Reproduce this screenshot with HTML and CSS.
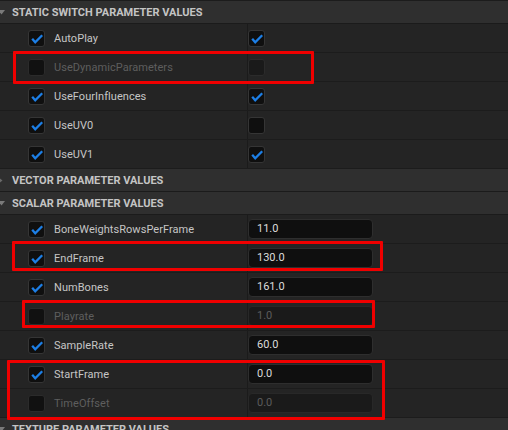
FILE: index.html
```html
<!DOCTYPE html>
<html>
<head>
<meta charset="utf-8">
<link rel="stylesheet" href="styles.css">
</head>
<body>
<div class="panel">
  <div class="header">
    <span class="arrow"><svg width="12" height="22" viewBox="0 0 12 22"><polygon points="-2,9 5,9 1.5,13.5" fill="#7a7a7a"/></svg></span>
    <span class="header-title">STATIC SWITCH PARAMETER VALUES</span>
  </div>
  <div class="row">
    <div class="name"><span class="cb on"><svg viewBox="0 0 17 17"><polyline points="4.2,8.8 7.2,12.2 14.2,5.2"/></svg></span><span class="label">AutoPlay</span></div>
    <div class="value"><span class="cb on"><svg viewBox="0 0 17 17"><polyline points="4.2,8.8 7.2,12.2 14.2,5.2"/></svg></span></div>
  </div>
  <div class="row">
    <div class="name"><span class="cb off dim"></span><span class="label dim">UseDynamicParameters</span></div>
    <div class="value"><span class="cb off dimval"></span></div>
  </div>
  <div class="row">
    <div class="name"><span class="cb on"><svg viewBox="0 0 17 17"><polyline points="4.2,8.8 7.2,12.2 14.2,5.2"/></svg></span><span class="label">UseFourInfluences</span></div>
    <div class="value"><span class="cb on"><svg viewBox="0 0 17 17"><polyline points="4.2,8.8 7.2,12.2 14.2,5.2"/></svg></span></div>
  </div>
  <div class="row">
    <div class="name"><span class="cb on"><svg viewBox="0 0 17 17"><polyline points="4.2,8.8 7.2,12.2 14.2,5.2"/></svg></span><span class="label">UseUV0</span></div>
    <div class="value"><span class="cb off"></span></div>
  </div>
  <div class="row">
    <div class="name"><span class="cb on"><svg viewBox="0 0 17 17"><polyline points="4.2,8.8 7.2,12.2 14.2,5.2"/></svg></span><span class="label">UseUV1</span></div>
    <div class="value"><span class="cb on"><svg viewBox="0 0 17 17"><polyline points="4.2,8.8 7.2,12.2 14.2,5.2"/></svg></span></div>
  </div>
  <div class="header">
    <span class="arrow"><svg width="12" height="22" viewBox="0 0 12 22"><polygon points="-2,8 2.5,11.5 -2,15" fill="#6a6a6a"/></svg></span>
    <span class="header-title">VECTOR PARAMETER VALUES</span>
  </div>
  <div class="header">
    <span class="arrow"><svg width="12" height="22" viewBox="0 0 12 22"><polygon points="-2,9 5,9 1.5,13.5" fill="#7a7a7a"/></svg></span>
    <span class="header-title">SCALAR PARAMETER VALUES</span>
  </div>
  <div class="row">
    <div class="name"><span class="cb on"><svg viewBox="0 0 17 17"><polyline points="4.2,8.8 7.2,12.2 14.2,5.2"/></svg></span><span class="label">BoneWeightsRowsPerFrame</span></div>
    <div class="value"><span class="num">11.0</span></div>
  </div>
  <div class="row">
    <div class="name"><span class="cb on"><svg viewBox="0 0 17 17"><polyline points="4.2,8.8 7.2,12.2 14.2,5.2"/></svg></span><span class="label">EndFrame</span></div>
    <div class="value"><span class="num">130.0</span></div>
  </div>
  <div class="row">
    <div class="name"><span class="cb on"><svg viewBox="0 0 17 17"><polyline points="4.2,8.8 7.2,12.2 14.2,5.2"/></svg></span><span class="label">NumBones</span></div>
    <div class="value"><span class="num">161.0</span></div>
  </div>
  <div class="row">
    <div class="name"><span class="cb off dim"></span><span class="label dim">Playrate</span></div>
    <div class="value"><span class="num dimnum">1.0</span></div>
  </div>
  <div class="row">
    <div class="name"><span class="cb on"><svg viewBox="0 0 17 17"><polyline points="4.2,8.8 7.2,12.2 14.2,5.2"/></svg></span><span class="label">SampleRate</span></div>
    <div class="value"><span class="num">60.0</span></div>
  </div>
  <div class="row">
    <div class="name"><span class="cb on"><svg viewBox="0 0 17 17"><polyline points="4.2,8.8 7.2,12.2 14.2,5.2"/></svg></span><span class="label">StartFrame</span></div>
    <div class="value"><span class="num">0.0</span></div>
  </div>
  <div class="row">
    <div class="name"><span class="cb off dim"></span><span class="label dim">TimeOffset</span></div>
    <div class="value"><span class="num dimnum">0.0</span></div>
  </div>
  <div class="header">
    <span class="arrow"><svg width="12" height="22" viewBox="0 0 12 22"><polygon points="-2,9 5,9 1.5,13.5" fill="#7a7a7a"/></svg></span>
    <span class="header-title">TEXTURE PARAMETER VALUES</span>
  </div>

  <div class="mark m1"></div>
  <div class="mark m2"></div>
  <div class="mark m3"></div>
  <div class="mark m4"></div>
</div>
</body>
</html>
```

FILE: styles.css
```css
html, body {
  margin: 0;
  padding: 0;
  background: #242424;
}
.panel {
  position: relative;
  width: 508px;
  height: 430px;
  overflow: hidden;
  background: #242424;
  border-top: 1px solid #1c1c1c;
  box-sizing: border-box;
  font-family: Roboto, "Open Sans", sans-serif;
}
.header {
  display: flex;
  align-items: center;
  height: 22px;
  background: #2f2f2f;
  border-bottom: 1px solid #1b1b1b;
}
.arrow {
  display: flex;
  width: 12px;
  height: 22px;
}
.header-title {
  font-size: 11px;
  font-weight: 700;
  color: #c4c4c4;
  letter-spacing: 0;
}
.row {
  display: grid;
  grid-template-columns: 247px 1px 1fr;
  height: 28px;
  border-bottom: 1px solid #1c1c1c;
  background: #242424;
}
.row::before {
  content: "";
  grid-column: 2;
  grid-row: 1;
  background: #1b1b1b;
}
.name {
  grid-column: 1;
  grid-row: 1;
  display: flex;
  align-items: center;
  padding-left: 28px;
  gap: 9px;
}
.value {
  grid-column: 3;
  grid-row: 1;
  display: flex;
  align-items: center;
}
.cb {
  display: block;
  width: 17px;
  height: 17px;
  box-sizing: border-box;
  border: 1px solid #353535;
  border-radius: 3px;
  background: #0f0f0f;
  flex: none;
}
.cb svg {
  display: block;
  fill: none;
  stroke: #1d7fe6;
  stroke-width: 2.3;
}
.cb.on svg { margin-left: -1px; margin-top: -1px; width: 17px; height: 17px; }
.cb.dim {
  background: #111111;
  border-color: #2b2b2b;
}
.cb.dimval {
  background: #1a1a1a;
  border-color: #2b2b2b;
}
.label {
  font-size: 11px;
  color: #c6c6c6;
  letter-spacing: 0.05px;
}
.label.dim {
  color: #5e5e5e;
}
.num {
  display: flex;
  align-items: center;
  box-sizing: border-box;
  width: 125px;
  height: 20px;
  margin-top: -1px;
  padding-left: 8px;
  background: #0f0f0f;
  border: 1px solid #2e2e2e;
  border-radius: 4px;
  font-size: 11px;
  color: #dcdcdc;
}
.num.dimnum {
  background: #1a1a1a;
  border-color: #282828;
  color: #5c5c5c;
}
.mark {
  position: absolute;
  box-sizing: border-box;
  border: 3px solid #f00000;
  border-radius: 1px;
}
.m1 { left: 13px; top: 50px; width: 301px; height: 33px; }
.m2 { left: 12px; top: 240px; width: 371px; height: 30px; }
.m3 { left: 22px; top: 299px; width: 353px; height: 28px; }
.m4 { left: 7px; top: 359px; width: 378px; height: 60px; }
```
